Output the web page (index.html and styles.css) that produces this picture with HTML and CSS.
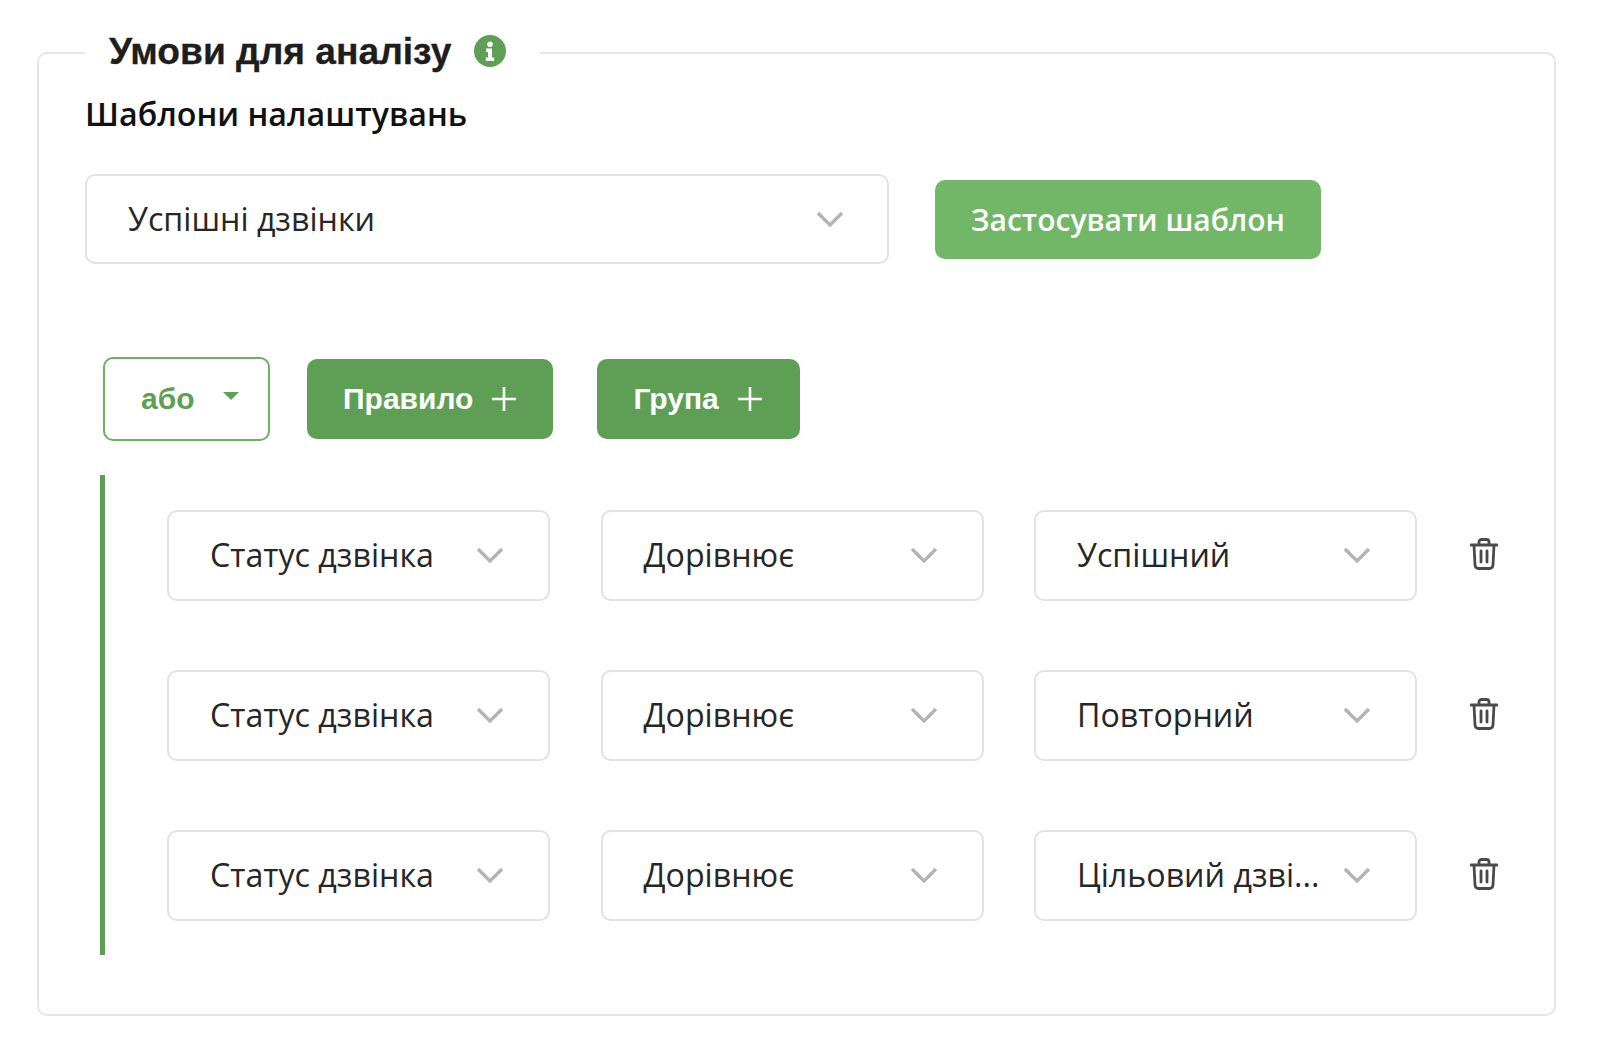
FILE: index.html
```html
<!DOCTYPE html>
<html lang="uk">
<head>
<meta charset="utf-8">
<title>Умови для аналізу</title>
<link rel="stylesheet" href="styles.css">
</head>
<body>
<fieldset class="card">
  <legend class="legend">
    <span class="legend-title">Умови для аналізу</span>
    <svg class="info" viewBox="0 0 32 32"><circle cx="16" cy="16" r="16" fill="#5f9f55"/><circle cx="16" cy="9.2" r="2.8" fill="#fff"/><path d="M12 13.5h6v9h2.200V26h-8.400v-3.500H14v-5.500h-2z" fill="#fff"/></svg>
  </legend>
  <div class="label">Шаблони налаштувань</div>
  <div class="template-row">
    <div class="select select-wide">
      <span class="select-text">Успішні дзвінки</span>
      <svg class="chevron" viewBox="0 0 28 16"><path d="M2 2l12 12L26 2"/></svg>
    </div>
    <button class="btn btn-apply">Застосувати шаблон</button>
  </div>
  <div class="actions">
    <div class="or-select"><span>або</span><i class="caret"></i></div>
    <button class="btn btn-add">Правило<svg class="plus" viewBox="0 0 26 26"><path d="M13 1v24M1 13h24"/></svg></button>
    <button class="btn btn-add btn-group">Група<svg class="plus" viewBox="0 0 26 26"><path d="M13 1v24M1 13h24"/></svg></button>
  </div>
  <div class="rules">
    <div class="rule">
      <div class="select"><span class="select-text">Статус дзвінка</span><svg class="chevron" viewBox="0 0 28 16"><path d="M2 2l12 12L26 2"/></svg></div>
      <div class="select"><span class="select-text">Дорівнює</span><svg class="chevron" viewBox="0 0 28 16"><path d="M2 2l12 12L26 2"/></svg></div>
      <div class="select"><span class="select-text">Успішний</span><svg class="chevron" viewBox="0 0 28 16"><path d="M2 2l12 12L26 2"/></svg></div>
      <svg class="trash" viewBox="0 0 28 32"><path d="M1 7h26M9 7V4a2.500 2.500 0 0 1 2.500-2.500h5A2.500 2.500 0 0 1 19 4v3M4 7l1 20a3.500 3.500 0 0 0 3.500 3.500h11A3.500 3.500 0 0 0 23 27l1-20M11 13v11M17 13v11"/></svg>
    </div>
    <div class="rule">
      <div class="select"><span class="select-text">Статус дзвінка</span><svg class="chevron" viewBox="0 0 28 16"><path d="M2 2l12 12L26 2"/></svg></div>
      <div class="select"><span class="select-text">Дорівнює</span><svg class="chevron" viewBox="0 0 28 16"><path d="M2 2l12 12L26 2"/></svg></div>
      <div class="select"><span class="select-text">Повторний</span><svg class="chevron" viewBox="0 0 28 16"><path d="M2 2l12 12L26 2"/></svg></div>
      <svg class="trash" viewBox="0 0 28 32"><path d="M1 7h26M9 7V4a2.500 2.500 0 0 1 2.500-2.500h5A2.500 2.500 0 0 1 19 4v3M4 7l1 20a3.500 3.500 0 0 0 3.500 3.500h11A3.500 3.500 0 0 0 23 27l1-20M11 13v11M17 13v11"/></svg>
    </div>
    <div class="rule">
      <div class="select"><span class="select-text">Статус дзвінка</span><svg class="chevron" viewBox="0 0 28 16"><path d="M2 2l12 12L26 2"/></svg></div>
      <div class="select"><span class="select-text">Дорівнює</span><svg class="chevron" viewBox="0 0 28 16"><path d="M2 2l12 12L26 2"/></svg></div>
      <div class="select"><span class="select-text">Цільовий дзві...</span><svg class="chevron" viewBox="0 0 28 16"><path d="M2 2l12 12L26 2"/></svg></div>
      <svg class="trash" viewBox="0 0 28 32"><path d="M1 7h26M9 7V4a2.500 2.500 0 0 1 2.500-2.500h5A2.500 2.500 0 0 1 19 4v3M4 7l1 20a3.500 3.500 0 0 0 3.500 3.500h11A3.500 3.500 0 0 0 23 27l1-20M11 13v11M17 13v11"/></svg>
    </div>
  </div>
</fieldset>
</body>
</html>
```
FILE: styles.css
```css
* { box-sizing: border-box; }
html, body { margin: 0; padding: 0; background: #fff; }
body { height: 1052px; overflow: hidden; padding: 30px 44px 0 37px; font-family: "Open Sans", sans-serif; color: #222; }
.card { display: block; margin: 0; min-width: 0; width: 1519px; height: 986px; border: 2px solid #e6e6e6; border-radius: 10px; padding: 0 0 0 46px; }
.legend { display: flex; align-items: center; gap: 23px; height: 46px; padding: 0 34px 5px 24px; margin-left: 0; }
.legend-title { font-family: "Liberation Sans", sans-serif; font-weight: 700; font-size: 37.2px; line-height: 42px; color: #1e1e1e; -webkit-text-stroke: 0.3px #1e1e1e; }
.info { width: 32px; height: 32px; display: block; }
.label { margin-top: 18px; font-weight: 600; font-size: 32.2px; line-height: 40px; color: #111; }
.template-row { display: flex; align-items: center; gap: 46px; margin-top: 40px; }
.select { display: flex; flex: none; align-items: center; justify-content: space-between; width: 383px; height: 90.500px; padding: 0 44px 0 41px; background: #fff; border: 2px solid #e2e2e2; border-radius: 10px; }
.select-wide { width: 804px; height: 90px; padding-right: 43px; }
.select-text { font-size: 32.2px; line-height: 42px; color: #262626; white-space: nowrap; }
.chevron { width: 28px; height: 16px; flex: none; fill: none; stroke: #b4b4b4; stroke-width: 3.4; }
.btn { display: flex; align-items: center; justify-content: center; border: 0; color: #fff; border-radius: 10px; margin: 0; padding: 0; }
.btn-apply { width: 386px; height: 79px; background: #72b668; font-family: "Open Sans", sans-serif; font-weight: 600; font-size: 30px; }
.actions { display: flex; align-items: center; gap: 37px; margin: 93px 0 0 18px; }
.or-select { display: flex; align-items: center; gap: 28px; width: 167px; height: 84px; padding-left: 36px; border: 2px solid #6fae65; border-radius: 10px; color: #5f9f55; font-family: "Liberation Sans", sans-serif; font-weight: 700; font-size: 30px; }
.caret { width: 0; height: 0; border-left: 8px solid transparent; border-right: 8px solid transparent; border-top: 8px solid #5f9f55; margin-top: -6px; }
.btn-add { gap: 18px; height: 80px; background: #5f9f55; font-family: "Liberation Sans", sans-serif; font-weight: 700; font-size: 30px; padding: 0 36px; }
.btn-group { margin-left: 7px; padding-right: 37px; }
.plus { width: 26px; height: 26px; fill: none; stroke: #fff; stroke-width: 2.6; }
.rules { display: flex; flex-direction: column; gap: 69.500px; width: 1400px; height: 480px; margin: 34px 0 0 15px; padding: 35px 0 0 62px; border-left: 5px solid #5f9f55; }
.rule { display: flex; align-items: center; gap: 50.500px; }
.trash { width: 28px; height: 32px; flex: none; margin: -3px 0 0 2px; fill: none; stroke: #4a4a4a; stroke-width: 2.8; stroke-linecap: round; stroke-linejoin: round; }
```
